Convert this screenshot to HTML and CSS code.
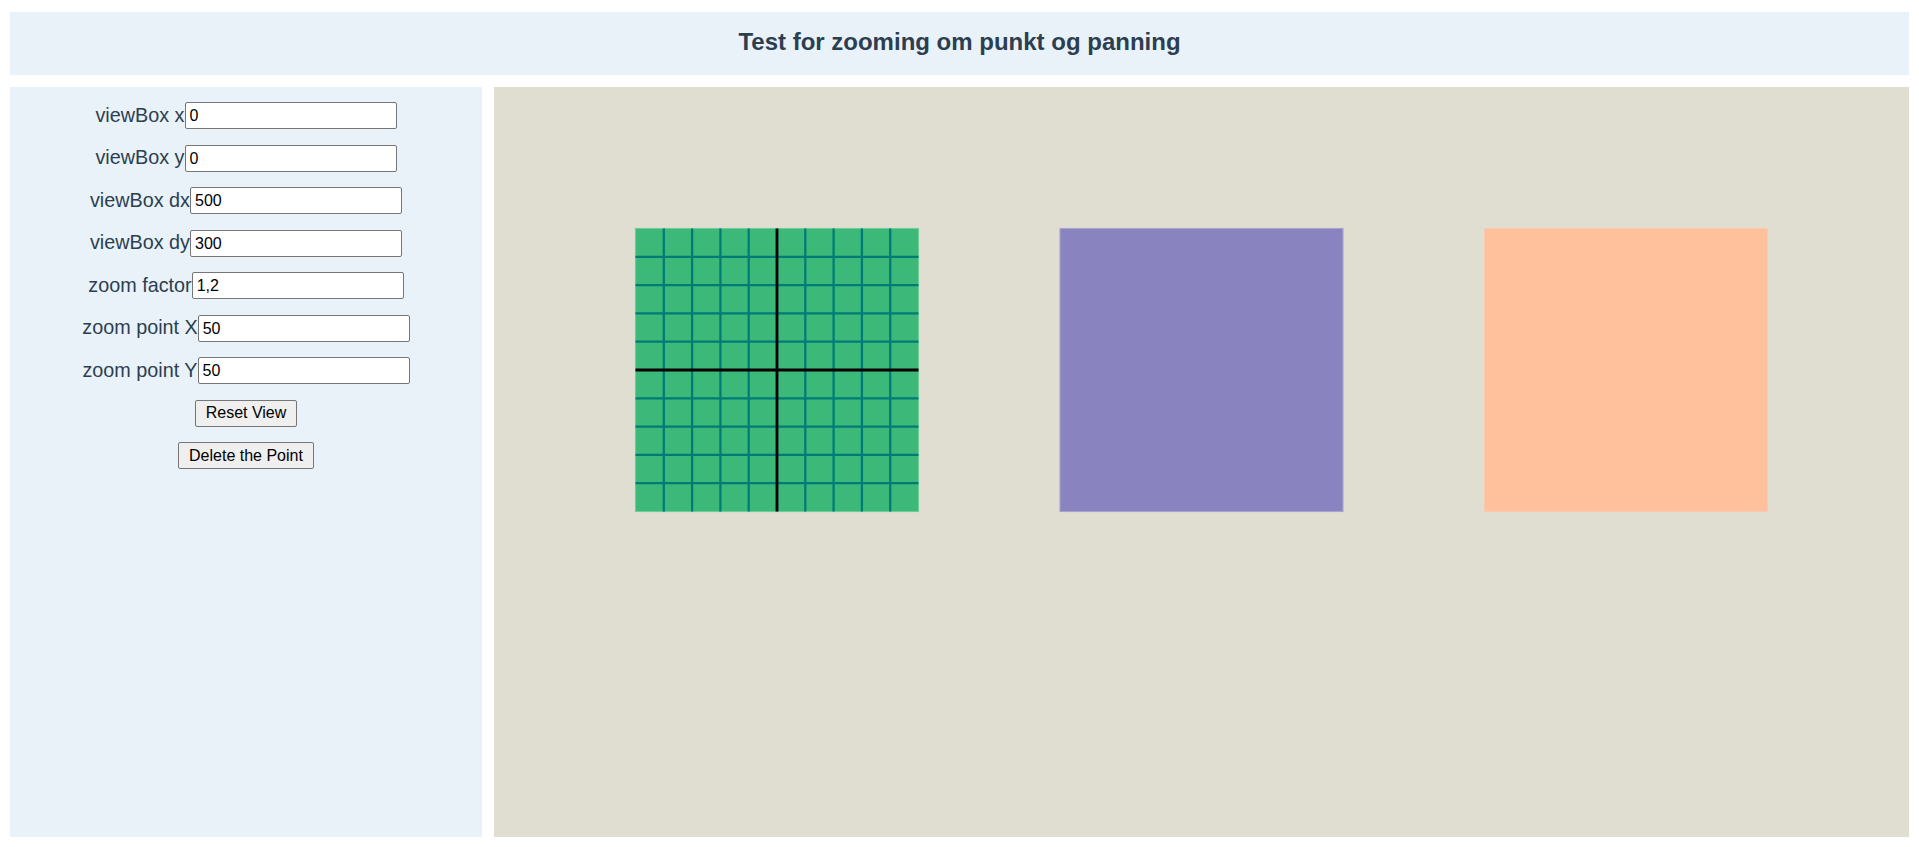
FILE: index.html
```html
<!DOCTYPE html>
<html lang="no">
<head>
<meta charset="utf-8">
<title>Test for zooming om punkt og panning</title>
<link rel="stylesheet" href="styles.css">
</head>
<body>
<header class="top">
  <h1 class="title">Test for zooming om punkt og panning</h1>
</header>
<main class="main">
  <aside class="panel">
    <div class="row"><label class="lbl" for="vbx">viewBox x</label><input class="fld" id="vbx" type="text" value="0"></div>
    <div class="row"><label class="lbl" for="vby">viewBox y</label><input class="fld" id="vby" type="text" value="0"></div>
    <div class="row"><label class="lbl" for="vbdx">viewBox dx</label><input class="fld" id="vbdx" type="text" value="500"></div>
    <div class="row"><label class="lbl" for="vbdy">viewBox dy</label><input class="fld" id="vbdy" type="text" value="300"></div>
    <div class="row"><label class="lbl" for="zf">zoom factor</label><input class="fld" id="zf" type="text" value="1,2"></div>
    <div class="row"><label class="lbl" for="zpx">zoom point X</label><input class="fld" id="zpx" type="text" value="50"></div>
    <div class="row"><label class="lbl" for="zpy">zoom point Y</label><input class="fld" id="zpy" type="text" value="50"></div>
    <div class="row btnrow"><button class="btn" type="button">Reset View</button></div>
    <div class="row btnrow"><button class="btn" type="button">Delete the Point</button></div>
  </aside>
  <section class="stage">
    <svg class="canvas" viewBox="0 0 500 300" xmlns="http://www.w3.org/2000/svg">
      <rect class="sq-green" x="50" y="50" width="100" height="100"/>
      <g class="grid">
        <line x1="60" y1="50" x2="60" y2="150"/>
        <line x1="70" y1="50" x2="70" y2="150"/>
        <line x1="80" y1="50" x2="80" y2="150"/>
        <line x1="90" y1="50" x2="90" y2="150"/>
        <line x1="110" y1="50" x2="110" y2="150"/>
        <line x1="120" y1="50" x2="120" y2="150"/>
        <line x1="130" y1="50" x2="130" y2="150"/>
        <line x1="140" y1="50" x2="140" y2="150"/>
        <line x1="50" y1="60" x2="150" y2="60"/>
        <line x1="50" y1="70" x2="150" y2="70"/>
        <line x1="50" y1="80" x2="150" y2="80"/>
        <line x1="50" y1="90" x2="150" y2="90"/>
        <line x1="50" y1="110" x2="150" y2="110"/>
        <line x1="50" y1="120" x2="150" y2="120"/>
        <line x1="50" y1="130" x2="150" y2="130"/>
        <line x1="50" y1="140" x2="150" y2="140"/>
      </g>
      <g class="axes">
        <line x1="100" y1="50" x2="100" y2="150"/>
        <line x1="50" y1="100" x2="150" y2="100"/>
      </g>
      <rect class="sq-purple" x="200" y="50" width="100" height="100"/>
      <rect class="sq-orange" x="350" y="50" width="100" height="100"/>
    </svg>
  </section>
</main>
</body>
</html>
```
FILE: styles.css
```css
html, body {
  height: 100%;
}
body {
  margin: 0;
  padding: 12px 10px 10px;
  box-sizing: border-box;
  background: #ffffff;
  font-family: "Liberation Sans", Arial, sans-serif;
  color: #2c3e50;
  display: flex;
  flex-direction: column;
  gap: 12px;
}
.top {
  height: 63px;
  flex: none;
  background: #e9f2f8;
  display: flex;
  align-items: center;
  justify-content: center;
}
.title {
  margin: 0;
  font-size: 24px;
  font-weight: bold;
  color: #2c3e50;
  line-height: 1;
  padding-bottom: 3px;
}
.main {
  flex: 1;
  display: flex;
  gap: 12px;
  min-height: 0;
}
.panel {
  width: 472px;
  flex: none;
  background: #e9f2f8;
  padding-top: 15px;
  box-sizing: border-box;
  display: flex;
  flex-direction: column;
  gap: 15.5px;
}
.row {
  display: flex;
  justify-content: center;
  align-items: center;
  height: 27px;
}
.lbl {
  font-size: 19.8px;
  color: #2c3e50;
  line-height: 1;
  margin-top: 0;
}
.fld {
  width: 212px;
  height: 27px;
  box-sizing: border-box;
  border: 1px solid #767676;
  border-radius: 2px;
  padding: 1px 4px 0;
  font-family: "Liberation Sans", Arial, sans-serif;
  font-size: 16px;
  color: #000;
  background: #fff;
  margin: 0;
}
.btnrow {
  height: 27px;
}
.btn {
  font-family: "Liberation Sans", Arial, sans-serif;
  font-size: 16px;
  color: #000;
  height: 27px;
  padding: 0 10px;
  border: 1px solid #767676;
  border-radius: 2px;
  background: #efefef;
  margin: 0;
}
.stage {
  flex: 1;
  background: #e0ded1;
  overflow: hidden;
  min-width: 0;
}
.canvas {
  display: block;
  width: 100%;
  height: auto;
  aspect-ratio: 5 / 3;
}
.sq-green {
  fill: #3cb878;
  stroke: #6fcc98;
  stroke-width: 0.4;
}
.grid line {
  stroke: #007b78;
  stroke-width: 0.8;
}
.axes line {
  stroke: #000;
  stroke-width: 1;
}
.sq-purple {
  fill: #8983bf;
  stroke: #a7a3cf;
  stroke-width: 0.4;
}
.sq-orange {
  fill: #ffc09c;
  stroke: #f8cbb0;
  stroke-width: 0.4;
}
```
